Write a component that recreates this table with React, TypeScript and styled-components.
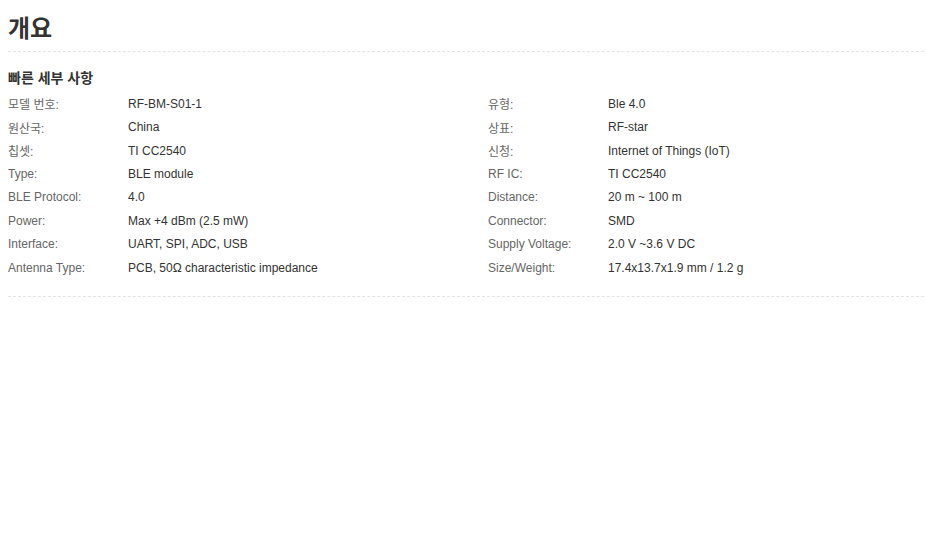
import * as React from 'react';
import styled, { createGlobalStyle } from 'styled-components';

const GlobalStyle = createGlobalStyle`
  html, body {
    margin: 0;
    padding: 0;
    background: #fff;
  }
  body {
    font-family: 'Liberation Sans', Arial, 'Noto Sans CJK KR', sans-serif;
    color: #333;
  }
`;

const Page = styled.div`
  padding: 0 2px 0 8px;
`;

const Title = styled.h1`
  margin: 0;
  padding-top: 16px;
  height: 52px;
  box-sizing: border-box;
  font-size: 24px;
  line-height: 26px;
  font-weight: bold;
  color: #333;
  border-bottom: 1px dashed #e4e4e4;
`;

const Section = styled.section`
  padding: 16px 0 16px;
  border-bottom: 1px dashed #e4e4e4;
`;

const SectionTitle = styled.h3`
  margin: 0 0 4px;
  font-size: 14px;
  line-height: 20px;
  font-weight: bold;
  color: #333;
`;

const Grid = styled.div`
  display: grid;
  grid-template-columns: 480px 1fr;
`;

const Column = styled.dl`
  margin: 0;
`;

const Row = styled.div`
  display: flex;
  height: 23.45px;
  align-items: center;
  font-size: 12px;
`;

const Label = styled.dt`
  width: 120px;
  flex-shrink: 0;
  color: #666;
`;

const Value = styled.dd`
  margin: 0;
  color: #333;
`;

interface Spec {
  label: string;
  value: string;
}

const left: Spec[] = [
  { label: '모델 번호:', value: 'RF-BM-S01-1' },
  { label: '원산국:', value: 'China' },
  { label: '칩셋:', value: 'TI CC2540' },
  { label: 'Type:', value: 'BLE module' },
  { label: 'BLE Protocol:', value: '4.0' },
  { label: 'Power:', value: 'Max +4 dBm (2.5 mW)' },
  { label: 'Interface:', value: 'UART, SPI, ADC, USB' },
  { label: 'Antenna Type:', value: 'PCB, 50Ω characteristic impedance' },
];

const right: Spec[] = [
  { label: '유형:', value: 'Ble 4.0' },
  { label: '상표:', value: 'RF-star' },
  { label: '신청:', value: 'Internet of Things (IoT)' },
  { label: 'RF IC:', value: 'TI CC2540' },
  { label: 'Distance:', value: '20 m ~ 100 m' },
  { label: 'Connector:', value: 'SMD' },
  { label: 'Supply Voltage:', value: '2.0 V ~3.6 V DC' },
  { label: 'Size/Weight:', value: '17.4x13.7x1.9 mm / 1.2 g' },
];

const SpecColumn = ({ items }: { items: Spec[] }) => (
  <Column>
    {items.map((item) => (
      <Row key={item.label}>
        <Label>{item.label}</Label>
        <Value>{item.value}</Value>
      </Row>
    ))}
  </Column>
);

export default function App() {
  return (
    <Page>
      <GlobalStyle />
      <Title>개요</Title>
      <Section>
        <SectionTitle>빠른 세부 사항</SectionTitle>
        <Grid>
          <SpecColumn items={left} />
          <SpecColumn items={right} />
        </Grid>
      </Section>
    </Page>
  );
}
